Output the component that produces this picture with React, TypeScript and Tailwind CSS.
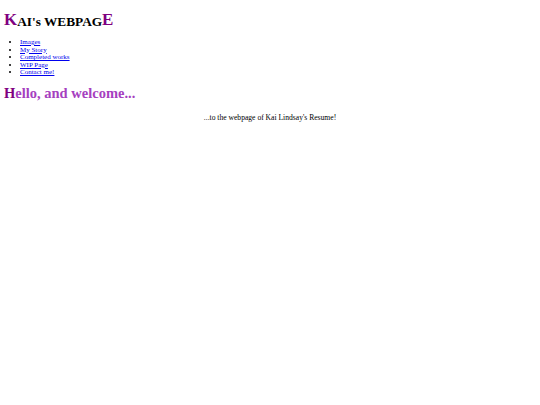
import React from "react";

export default function App() {
  const serif = { fontFamily: '"Liberation Serif", "Times New Roman", serif' };
  return (
    <div className="w-[540px] h-[405px] bg-white text-black" style={serif}>
      <div className="px-[4px] pt-[8px]">
        <h1 className="font-bold leading-none text-[13.3px] h-[20px] flex items-end">
          <span className="text-[#800080] text-[17px] leading-none">K</span>
          <span className="leading-none">AI's WEBPAG</span>
          <span className="text-[#800080] text-[17px] leading-none">E</span>
        </h1>
        <ul className="list-disc pl-[16px] mt-[11px] text-[7px] leading-[7.5px]">
          <li><a href="#" className="text-[#0000ee] underline">Images</a></li>
          <li><a href="#" className="text-[#0000ee] underline">My Story</a></li>
          <li><a href="#" className="text-[#0000ee] underline">Completed works</a></li>
          <li><a href="#" className="text-[#0000ee] underline">WIP Page</a></li>
          <li><a href="#" className="text-[#0000ee] underline">Contact me!</a></li>
        </ul>
        <h2 className="font-bold text-[14.5px] leading-[18px] mt-[7px] text-[#a63fc0]">
          <span className="text-[#800080]">H</span>ello, and welcome...
        </h2>
        <p className="text-center text-[7.6px] mt-[10px]">...to the webpage of Kai Lindsay's Resume!</p>
      </div>
    </div>
  );
}
